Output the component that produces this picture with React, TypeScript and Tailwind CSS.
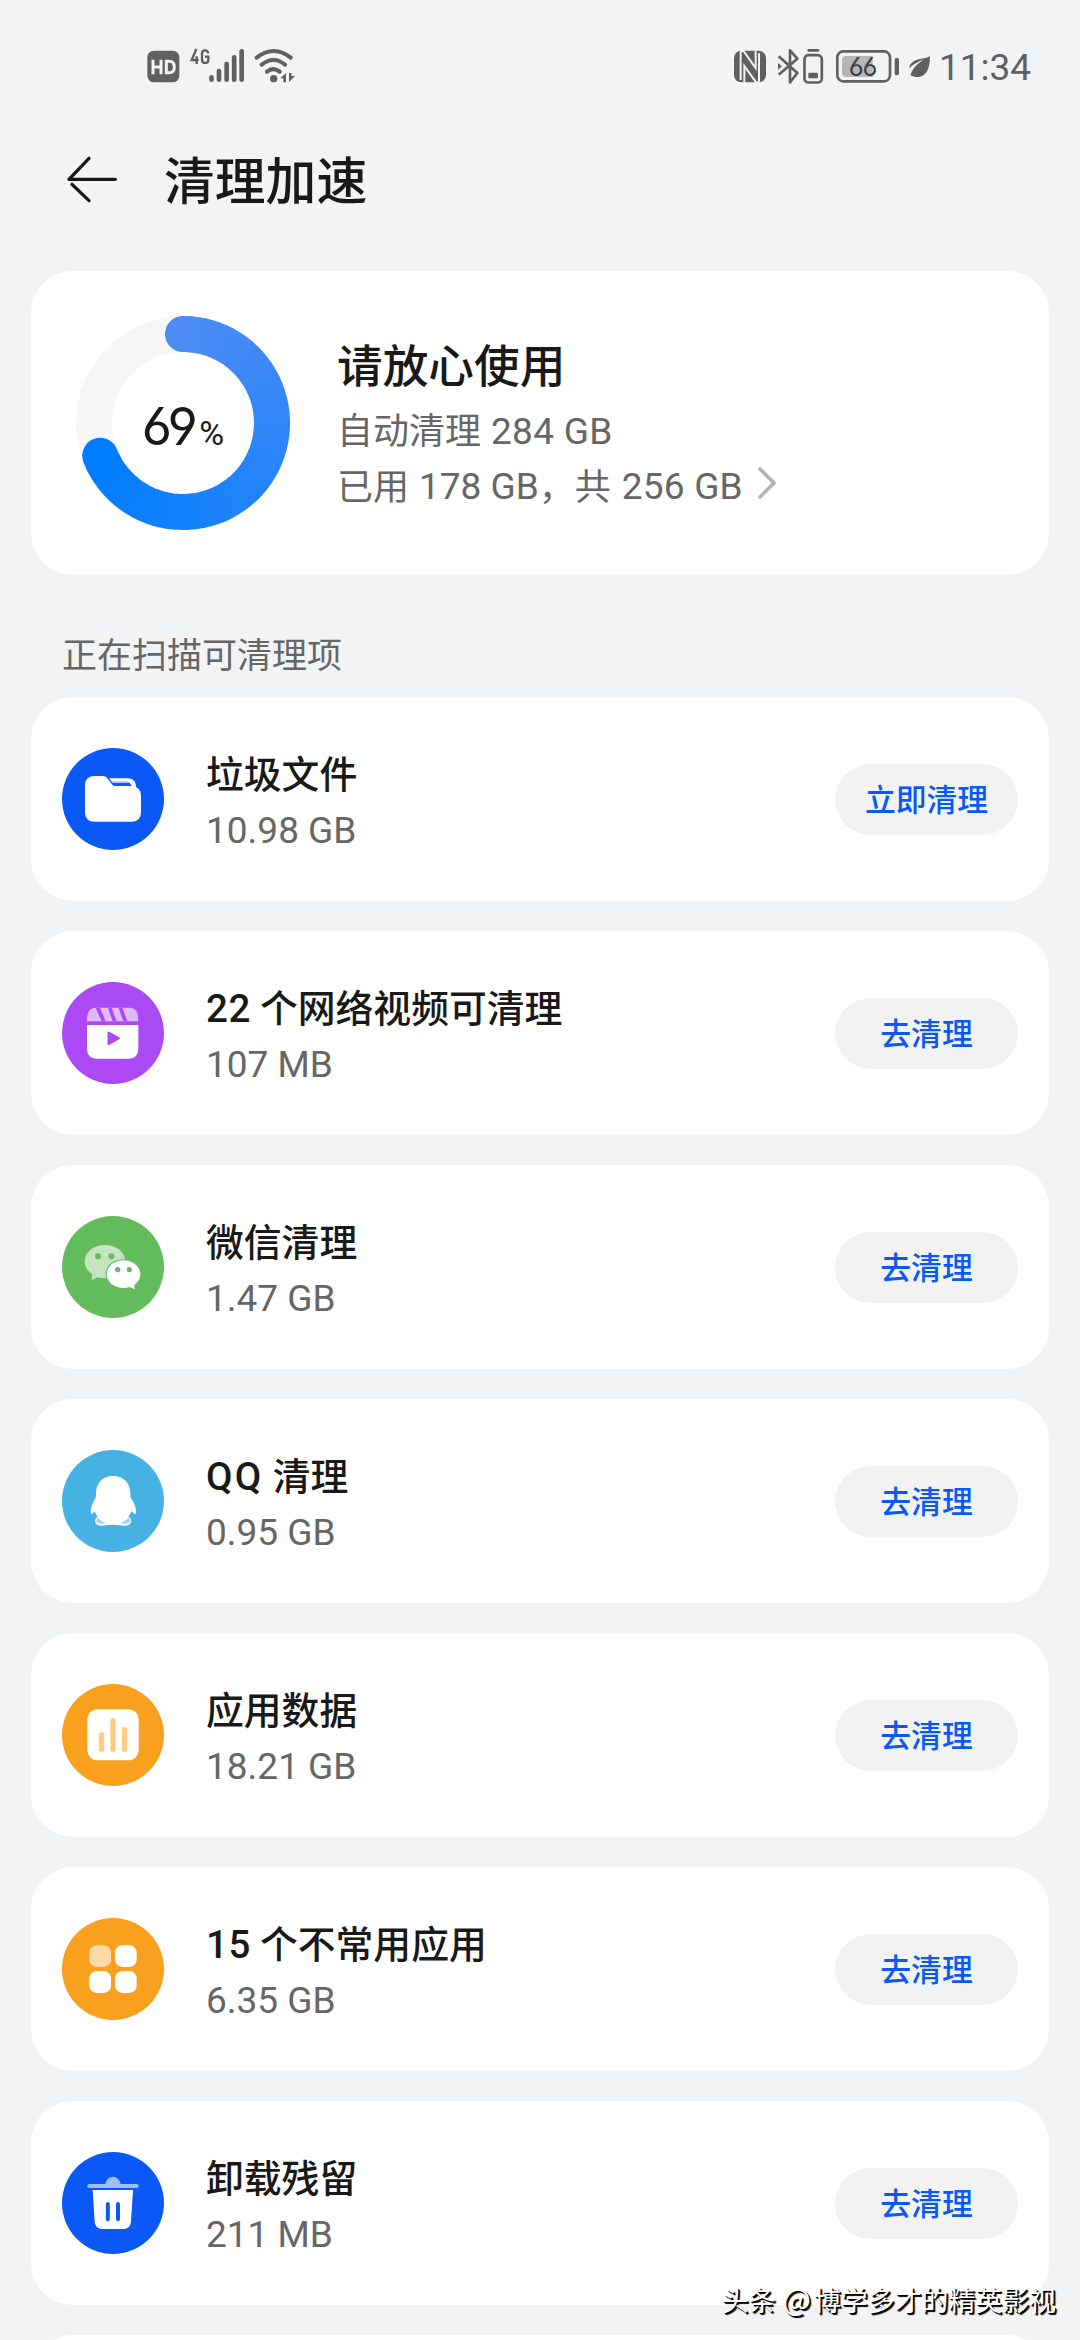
import React from "react";

const INK = "#5f6062";

function Latin({ children, className = "" }: { children: React.ReactNode; className?: string }) {
  return <span className={`translate-y-[2.5px] font-['Roboto'] ${className}`}>{children}</span>;
}

function StatusBar() {
  return (
    <div className="flex h-[132px] shrink-0 items-start justify-between pt-[48px] pr-[48px] pl-[147px] text-[#5f6062]">
      <div className="flex">
        <svg width="33" height="36" viewBox="51 54 99 108">
          <rect x="52" y="62" width="96" height="95" rx="20" fill={INK} />
          <g stroke="#f1f3f5" strokeWidth="9" fill="none">
            <path d="M69 89v44M93 89v44M69 111h24M109 93.500v35h8c10 0 16-6 16-17.500s-6-17.500-16-17.500z" />
          </g>
        </svg>
        <svg className="ml-[10px]" width="55" height="36" viewBox="180 54 165 108">
          <g stroke={INK} strokeWidth="7" fill="none">
            <path d="M199 57l-14 33h21M200 79v23M235 70c-2-12-19-12-19 0v19c0 13 19 13 19 0v-9h-10" />
          </g>
          <g stroke={INK} strokeWidth="14" strokeLinecap="round">
            <path d="M244.500 142v7M267 123v26M290 102v47M312.500 82v67M335 64v85" />
          </g>
        </svg>
        <svg className="ml-[9px]" width="42" height="36" viewBox="372 54 126 108">
          <g stroke={INK} strokeWidth="12" fill="none" strokeLinecap="round">
            <path d="M380 83q51-40 102 0M395 104q36-28 70 0M411 125q19-15 38 0" />
          </g>
          <circle cx="431" cy="146" r="11" fill={INK} />
          <path d="M451 145l17-16v28h-8v-12zM477 129h7v9h11l-18 18z" fill={INK} />
        </svg>
      </div>
      <div className="flex">
        <svg width="32" height="36" viewBox="72 54 96 108">
          <rect x="72" y="62" width="96" height="95" rx="22" fill={INK} />
          <path d="M92 150V66q2-4 8-4l37 52V62M147 70v84q-2 4-8 4l-36-50v50" fill="none" stroke="#f1f3f5" strokeWidth="6" />
        </svg>
        <svg className="ml-[11px]" width="47" height="36" viewBox="201 54 141 108">
          <g stroke={INK} strokeWidth="8" fill="none" strokeLinejoin="round">
            <path d="M206 79l56 50-22 28V61l22 25-56 48" />
            <rect x="283.500" y="75.500" width="52" height="82" rx="12" />
          </g>
          <path d="M204 99l12 10-12 10z" fill={INK} />
          <rect x="292" y="57" width="36" height="8" rx="4" fill={INK} />
          <rect x="295" y="128" width="29" height="17" rx="3" fill={INK} />
        </svg>
        <svg className="ml-[12px]" width="64" height="36" viewBox="378 54 192 108">
          <rect x="382" y="64" width="158" height="90" rx="18" fill="none" stroke={INK} strokeWidth="8" />
          <path d="M408 78h80v63h-80q-12 0-12-12V90q0-12 12-12z" fill="#b4b5b6" />
          <rect x="554" y="83" width="13" height="53" rx="6.500" fill={INK} />
          <text x="459" y="138" fontSize="77" textAnchor="middle" textLength="86" fontFamily="Inter" fill="#3d3e40" style={{ fontFeatureSettings: "'cv03','cv04'" }}>66</text>
        </svg>
        <svg className="ml-[8px]" width="23" height="36" viewBox="594 54 69 108">
          <path d="M660 78c-7 11-60 2-62 38 13-15 25-19 43-28-17 14-31 22-40 48 35 16 60-5 59-58z" fill={INK} />
        </svg>
        <Latin className="ml-[8px] -mt-[6px] w-[93px] text-[37px] leading-[46px] whitespace-nowrap">11:34</Latin>
      </div>
    </div>
  );
}

const RING_FROM = [76, 139, 244];
const RING_TO = [0, 125, 255];
const SEGMENTS = 62;
const SWEEP = 248.4;

function ringPoint(deg: number) {
  const a = (deg * Math.PI) / 180;
  return `${(107 + 89 * Math.sin(a)).toFixed(2)} ${(107 - 89 * Math.cos(a)).toFixed(2)}`;
}

function UsageRing() {
  return (
    <div className="relative size-[214px] shrink-0">
      <svg width="214" height="214" viewBox="0 0 214 214" fill="none" strokeWidth="36">
        <circle cx="107" cy="107" r="89" stroke="#f6f6f7" />
        {Array.from({ length: SEGMENTS }, (_, i) => {
          const t = i / (SEGMENTS - 1);
          const rgb = RING_FROM.map((c, k) => Math.round(c + (RING_TO[k] - c) * t));
          const start = i * (SWEEP / SEGMENTS);
          const end = Math.min(SWEEP, start + SWEEP / SEGMENTS + 0.6);
          return (
            <path
              key={i}
              d={`M${ringPoint(start)}A89 89 0 0 1 ${ringPoint(end)}`}
              stroke={`rgb(${rgb.join(",")})`}
              strokeLinecap={i === 0 || i === SEGMENTS - 1 ? "round" : "butt"}
            />
          );
        })}
      </svg>
      <div className="absolute inset-0 flex items-baseline justify-center pt-[71px] font-['Inter'] leading-[80px] text-[#191919]">
        <span className="text-[52px] tracking-[-2.500px]" style={{ fontFeatureSettings: "'cv03','cv04'" }}>69</span>
        <span className="ml-[4px] font-['Roboto'] text-[34px]">%</span>
      </div>
    </div>
  );
}

const icons: Record<string, React.ReactNode> = {
  folder: (
    <>
      <path d="M142 91h54c18 0 26 10 26 29l-62-1z" fill="#fff" />
      <path d="M146 101h46q12 0 17 13h-55z" fill="#0a59f7" />
      <path d="M150 102h43q7 0 9 3h-50z" fill="#9dbdfc" />
      <path d="M69 114c0-20 10-30 30-30h22c7 0 11 2 15 7l15 19c3 4 7 5 12 5h44c20 0 30 10 30 30v46c0 20-10 30-30 30H99c-20 0-30-10-30-30z" fill="#fff" />
    </>
  ),
  video: (
    <>
      <path d="M75 118c0-28 7-41 27-41h100c20 0 27 13 27 41z" fill="#e1bafc" />
      <path d="M101 77h13l17 41h-12zM138 77h11l15 41h-12zM170 77h11l15 41h-12z" fill="#ab4af5" />
      <path d="M75 129h154v70c0 21-10 31-31 31h-92c-21 0-31-10-31-31z" fill="#fff" />
      <path d="M140 152v34l30-17z" fill="#ab4af5" stroke="#ab4af5" strokeWidth="7" strokeLinejoin="round" />
    </>
  ),
  wechat: (
    <>
      <path d="M129 87c34 0 61 22 61 50s-27 50-61 50c-8 0-15-1-22-3l-18 9 2-18c-14-9-23-23-23-38 0-28 27-50 61-50z" fill="#c4e5bf" />
      <circle cx="108" cy="121" r="9" fill="#64bb5c" />
      <circle cx="148" cy="121" r="9" fill="#64bb5c" />
      <path d="M184 130c30 0 53 19 53 44 0 13-6 24-16 32l1 18-21-6c-5 1-11 2-17 2-30 0-53-20-53-46s23-44 53-44z" fill="#64bb5c" />
      <path d="M184 133c28 0 51 18 51 42 0 13-7 24-18 32l1 13-15-7c-6 2-12 3-19 3-28 0-50-18-50-41s22-42 50-42z" fill="#fff" />
      <circle cx="167" cy="161" r="8" fill="#64bb5c" />
      <circle cx="202" cy="161" r="8" fill="#64bb5c" />
    </>
  ),
  qq: (
    <>
      <path d="M153 78c32 0 51 22 52 50 0 8 1 12 1 17 10 12 18 31 16 45-2 5-8 0-14-6-2 7-5 11-9 16 14 6 11 26-9 27-14 0-22-3-37-3s-23 3-37 3c-20-1-21-21-9-27-4-5-7-9-9-16-3 6-10 11-11 6-3-15 6-33 14-45 0-5 1-9 1-17 1-28 19-50 51-50z" fill="#fff" />
      <path d="M108 203c6 7 14 12 24 16-10 4-27 3-29-5-1-5 1-9 5-11zM199 203c-6 7-14 12-24 16 10 4 27 3 29-5 1-5-1-9-5-11z" fill="#9fd6f2" />
    </>
  ),
  bars: (
    <>
      <rect x="76" y="76" width="154" height="153" rx="30" fill="#fff" />
      <path d="M118.500 152v44M153 111v85M187.500 137v59" stroke="#fccb86" strokeWidth="16" strokeLinecap="round" />
    </>
  ),
  grid: (
    <>
      <rect x="82" y="82" width="65" height="65" rx="22" fill="#fddaa8" />
      <rect x="159" y="82" width="65" height="65" rx="22" fill="#fff" />
      <rect x="82" y="159" width="65" height="66" rx="22" fill="#fff" />
      <rect x="159" y="159" width="65" height="66" rx="22" fill="#fff" />
    </>
  ),
  trash: (
    <>
      <path d="M82 96h48c2-12 11-22 23-22s21 10 23 22h48c8 0 8 12 0 12H82c-8 0-8-12 0-12z" fill="#9dbdfc" />
      <path d="M92 114h121l-6 94c-1 15-9 23-24 23h-61c-15 0-23-8-24-23z" fill="#fff" />
      <path d="M137.500 156v46M168 156v46" stroke="#0a59f7" strokeWidth="12" strokeLinecap="round" />
    </>
  ),
};

const items = [
  { icon: "folder", color: "#0a59f7", prefix: "", title: "垃圾文件", size: "10.98 GB", action: "立即清理" },
  { icon: "video", color: "#ab4af5", prefix: "22", title: "个网络视频可清理", size: "107 MB", action: "去清理" },
  { icon: "wechat", color: "#64bb5c", prefix: "", title: "微信清理", size: "1.47 GB", action: "去清理" },
  { icon: "qq", color: "#46b1e3", prefix: "QQ", title: "清理", size: "0.95 GB", action: "去清理" },
  { icon: "bars", color: "#f9a01e", prefix: "", title: "应用数据", size: "18.21 GB", action: "去清理" },
  { icon: "grid", color: "#f9a01e", prefix: "15", title: "个不常用应用", size: "6.35 GB", action: "去清理" },
  { icon: "trash", color: "#0a59f7", prefix: "", title: "卸载残留", size: "211 MB", action: "去清理" },
];

function ItemCard({ item }: { item: (typeof items)[number] }) {
  return (
    <div className="flex h-[204px] shrink-0 items-center rounded-[42px] bg-white pr-[31px] pl-[31px]">
      <svg className="shrink-0" width="102" height="102" viewBox="0 0 306 306" fill="none">
        <circle cx="153" cy="153" r="153" fill={item.color} />
        {icons[item.icon]}
      </svg>
      <div className="ml-[42px] flex grow flex-col pt-[2px]">
        <div className="flex h-[56px] items-center text-[37.8px] leading-[56px] font-medium text-[#191919]">
          {item.prefix && (
            <Latin className={`mr-[9px] text-[38.500px] ${item.prefix === "QQ" ? "tracking-[2.3px]" : "tracking-[0.6px]"}`}>
              {item.prefix}
            </Latin>
          )}
          <span>{item.title}</span>
        </div>
        <Latin className="h-[56px] text-[37px] leading-[56px] text-[#666666]">{item.size}</Latin>
      </div>
      <button className="flex h-[71px] w-[183px] items-center justify-center rounded-full bg-[#f2f2f3] pb-[4px] text-[30.8px] leading-[67px] font-medium text-[#0a59f7]">
        {item.action}
      </button>
    </div>
  );
}

export default function App() {
  return (
    <div className="relative flex h-[2340px] w-[1080px] flex-col overflow-hidden bg-[#f1f3f5] font-['Noto_Sans_CJK_SC',sans-serif]">
      <StatusBar />
      <header className="flex h-[98px] shrink-0 items-center pl-[66px]">
        <svg className="mb-[3px]" width="53" height="49" viewBox="199 105 159 147" fill="none" stroke="#191919" strokeWidth="10" strokeLinecap="round" strokeLinejoin="round">
          <path d="M347 178H208l60-63M217 193l51 49" />
        </svg>
        <h1 className="ml-[45px] pb-[5px] text-[50.8px] leading-[93px] font-medium text-[#191919]">清理加速</h1>
      </header>

      <main className="mt-[41px] flex flex-col px-[31px]">
        <section className="flex h-[304px] shrink-0 items-center rounded-[42px] bg-white pl-[45px]">
          <UsageRing />
          <div className="ml-[47px] flex flex-col">
            <div className="h-[67px] pb-[9px] text-[45.7px] leading-[58px] font-medium text-[#191919]">请放心使用</div>
            <div className="flex h-[55px] items-center text-[36px] leading-[55px] whitespace-pre text-[#666666]">
              自动清理<Latin className="ml-[10px] text-[37px] tracking-[0.3px]">284 GB</Latin>
            </div>
            <div className="flex h-[56px] items-center text-[36px] leading-[56px] whitespace-pre text-[#666666]">
              已用<Latin className="ml-[10px] text-[37px]">178 GB</Latin>，共<Latin className="ml-[11px] text-[37px] tracking-[0.2px]">256 GB</Latin>
              <svg className="ml-[14px]" width="20" height="34" viewBox="0 0 20 34" fill="none" stroke="#b2b2b2" strokeWidth="3.600" strokeLinecap="round" strokeLinejoin="round">
                <path d="M3 2l14 14L3 30" />
              </svg>
            </div>
          </div>
        </section>

        <h2 className="mt-[52px] ml-[31px] h-[52px] text-[35px] leading-[52px] text-[#666666]">正在扫描可清理项</h2>

        <div className="mt-[18px] flex flex-col gap-[30px]">
          {items.map((item) => (
            <ItemCard key={item.title} item={item} />
          ))}
          <div className="h-[204px] shrink-0 rounded-[42px] bg-white" />
        </div>
      </main>

      <div className="absolute right-[24px] bottom-[20px] text-[26.900px] leading-[40px] whitespace-nowrap text-white [text-shadow:1px_1px_0_#000,2px_2px_1px_#000]">
        头条 <span className="mr-[3px] ml-[1px] text-[30px]">@</span>博学多才的精英影视
      </div>
    </div>
  );
}
